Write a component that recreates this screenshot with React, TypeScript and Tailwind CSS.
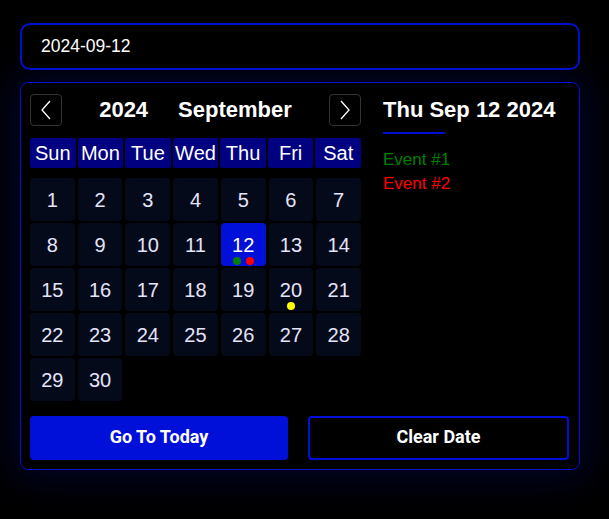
import React from "react";

const weekdays = ["Sun", "Mon", "Tue", "Wed", "Thu", "Fri", "Sat"];

const dots: Record<number, string[]> = {
  12: ["bg-[#008000]", "bg-[#ff0000]"],
  20: ["bg-[#ffff00]"],
};

function Chevron({ dir }: { dir: "left" | "right" }) {
  return (
    <button className="w-8 h-8 flex items-center justify-center border border-[#333] rounded-[4px] bg-black">
      <svg width="12" height="22" viewBox="0 0 12 22" fill="none" stroke="white" strokeWidth="1.3">
        {dir === "left" ? <path d="M10 2 L2 11 L10 20" /> : <path d="M2 2 L10 11 L2 20" />}
      </svg>
    </button>
  );
}

export default function App() {
  const days = Array.from({ length: 30 }, (_, i) => i + 1);
  // Sept 2024 starts on Sunday
  return (
    <div
      className="w-[609px] h-[519px] bg-black pt-[23px] pl-5"
      style={{ fontFamily: '"Liberation Sans", Arial, sans-serif' }}
    >
      <div className="w-[560px]">
        <input
          readOnly
          value="2024-09-12"
          className="w-full h-[47px] bg-black border-2 border-[#0010d0] rounded-[10px] pl-[19px] text-white text-[17.5px] outline-none"
        />

        <div className="mt-3 h-[388px] border border-[#0010d0] rounded-[8px] bg-black pl-[9px] pr-[10px] pt-[10px] shadow-[0_0_40px_8px_rgba(0,10,90,0.45)]">
          <div className="flex gap-[22px]">
            <div className="w-[331px]">
              <div className="flex items-center">
                <Chevron dir="left" />
                <div className="flex-1 flex justify-center gap-[30px] text-white font-bold text-[22px]">
                  <span>2024</span>
                  <span>September</span>
                </div>
                <Chevron dir="right" />
              </div>

              <div className="grid grid-cols-7 gap-x-[2px] mt-[12px]">
                {weekdays.map((d) => (
                  <div
                    key={d}
                    className="h-[30px] bg-[#000080] rounded-[2px] flex items-center justify-center text-white text-[20px]"
                  >
                    {d}
                  </div>
                ))}
              </div>

              <div className="grid grid-cols-7 gap-x-[3px] gap-y-[2px] mt-[10px]">
                {days.map((d) => (
                  <div
                    key={d}
                    className={`relative h-[43px] rounded-[4px] flex items-center justify-center text-[20px] ${
                      d === 12 ? "bg-[#0010d8] text-white" : "bg-[#050a1a] text-[#e4e4fa]"
                    }`}
                  >
                    {d}
                    {dots[d] && (
                      <div className="absolute bottom-[1px] left-0 right-0 flex justify-center gap-[5px]">
                        {dots[d].map((c, i) => (
                          <span key={i} className={`w-[8px] h-[8px] rounded-full ${c}`} />
                        ))}
                      </div>
                    )}
                  </div>
                ))}
              </div>
            </div>

            <div className="pt-[3px]">
              <div className="text-white font-bold text-[22px] leading-[28px]">Thu Sep 12 2024</div>
              <div className="w-[62px] h-[2px] bg-[#0010d0] mt-[8px]" />
              <div className="mt-[14px] text-[17px] leading-[24px]">
                <div className="text-[#008000]">Event #1</div>
                <div className="text-[#ff0000]">Event #2</div>
              </div>
            </div>
          </div>

          <div className="flex gap-[20px] mt-[15px]">
            <button
              className="w-[258px] h-[44px] bg-[#0010d8] rounded-[4px] text-white font-bold text-[18px] leading-[20px] pb-[2px]"
              style={{ fontFamily: "Roboto, sans-serif" }}
            >
              Go To Today
            </button>
            <button
              className="flex-1 h-[44px] bg-black border-2 border-[#0010d8] rounded-[4px] text-white font-bold text-[18px] leading-[20px] pb-[2px]"
              style={{ fontFamily: "Roboto, sans-serif" }}
            >
              Clear Date
            </button>
          </div>
        </div>
      </div>
    </div>
  );
}
